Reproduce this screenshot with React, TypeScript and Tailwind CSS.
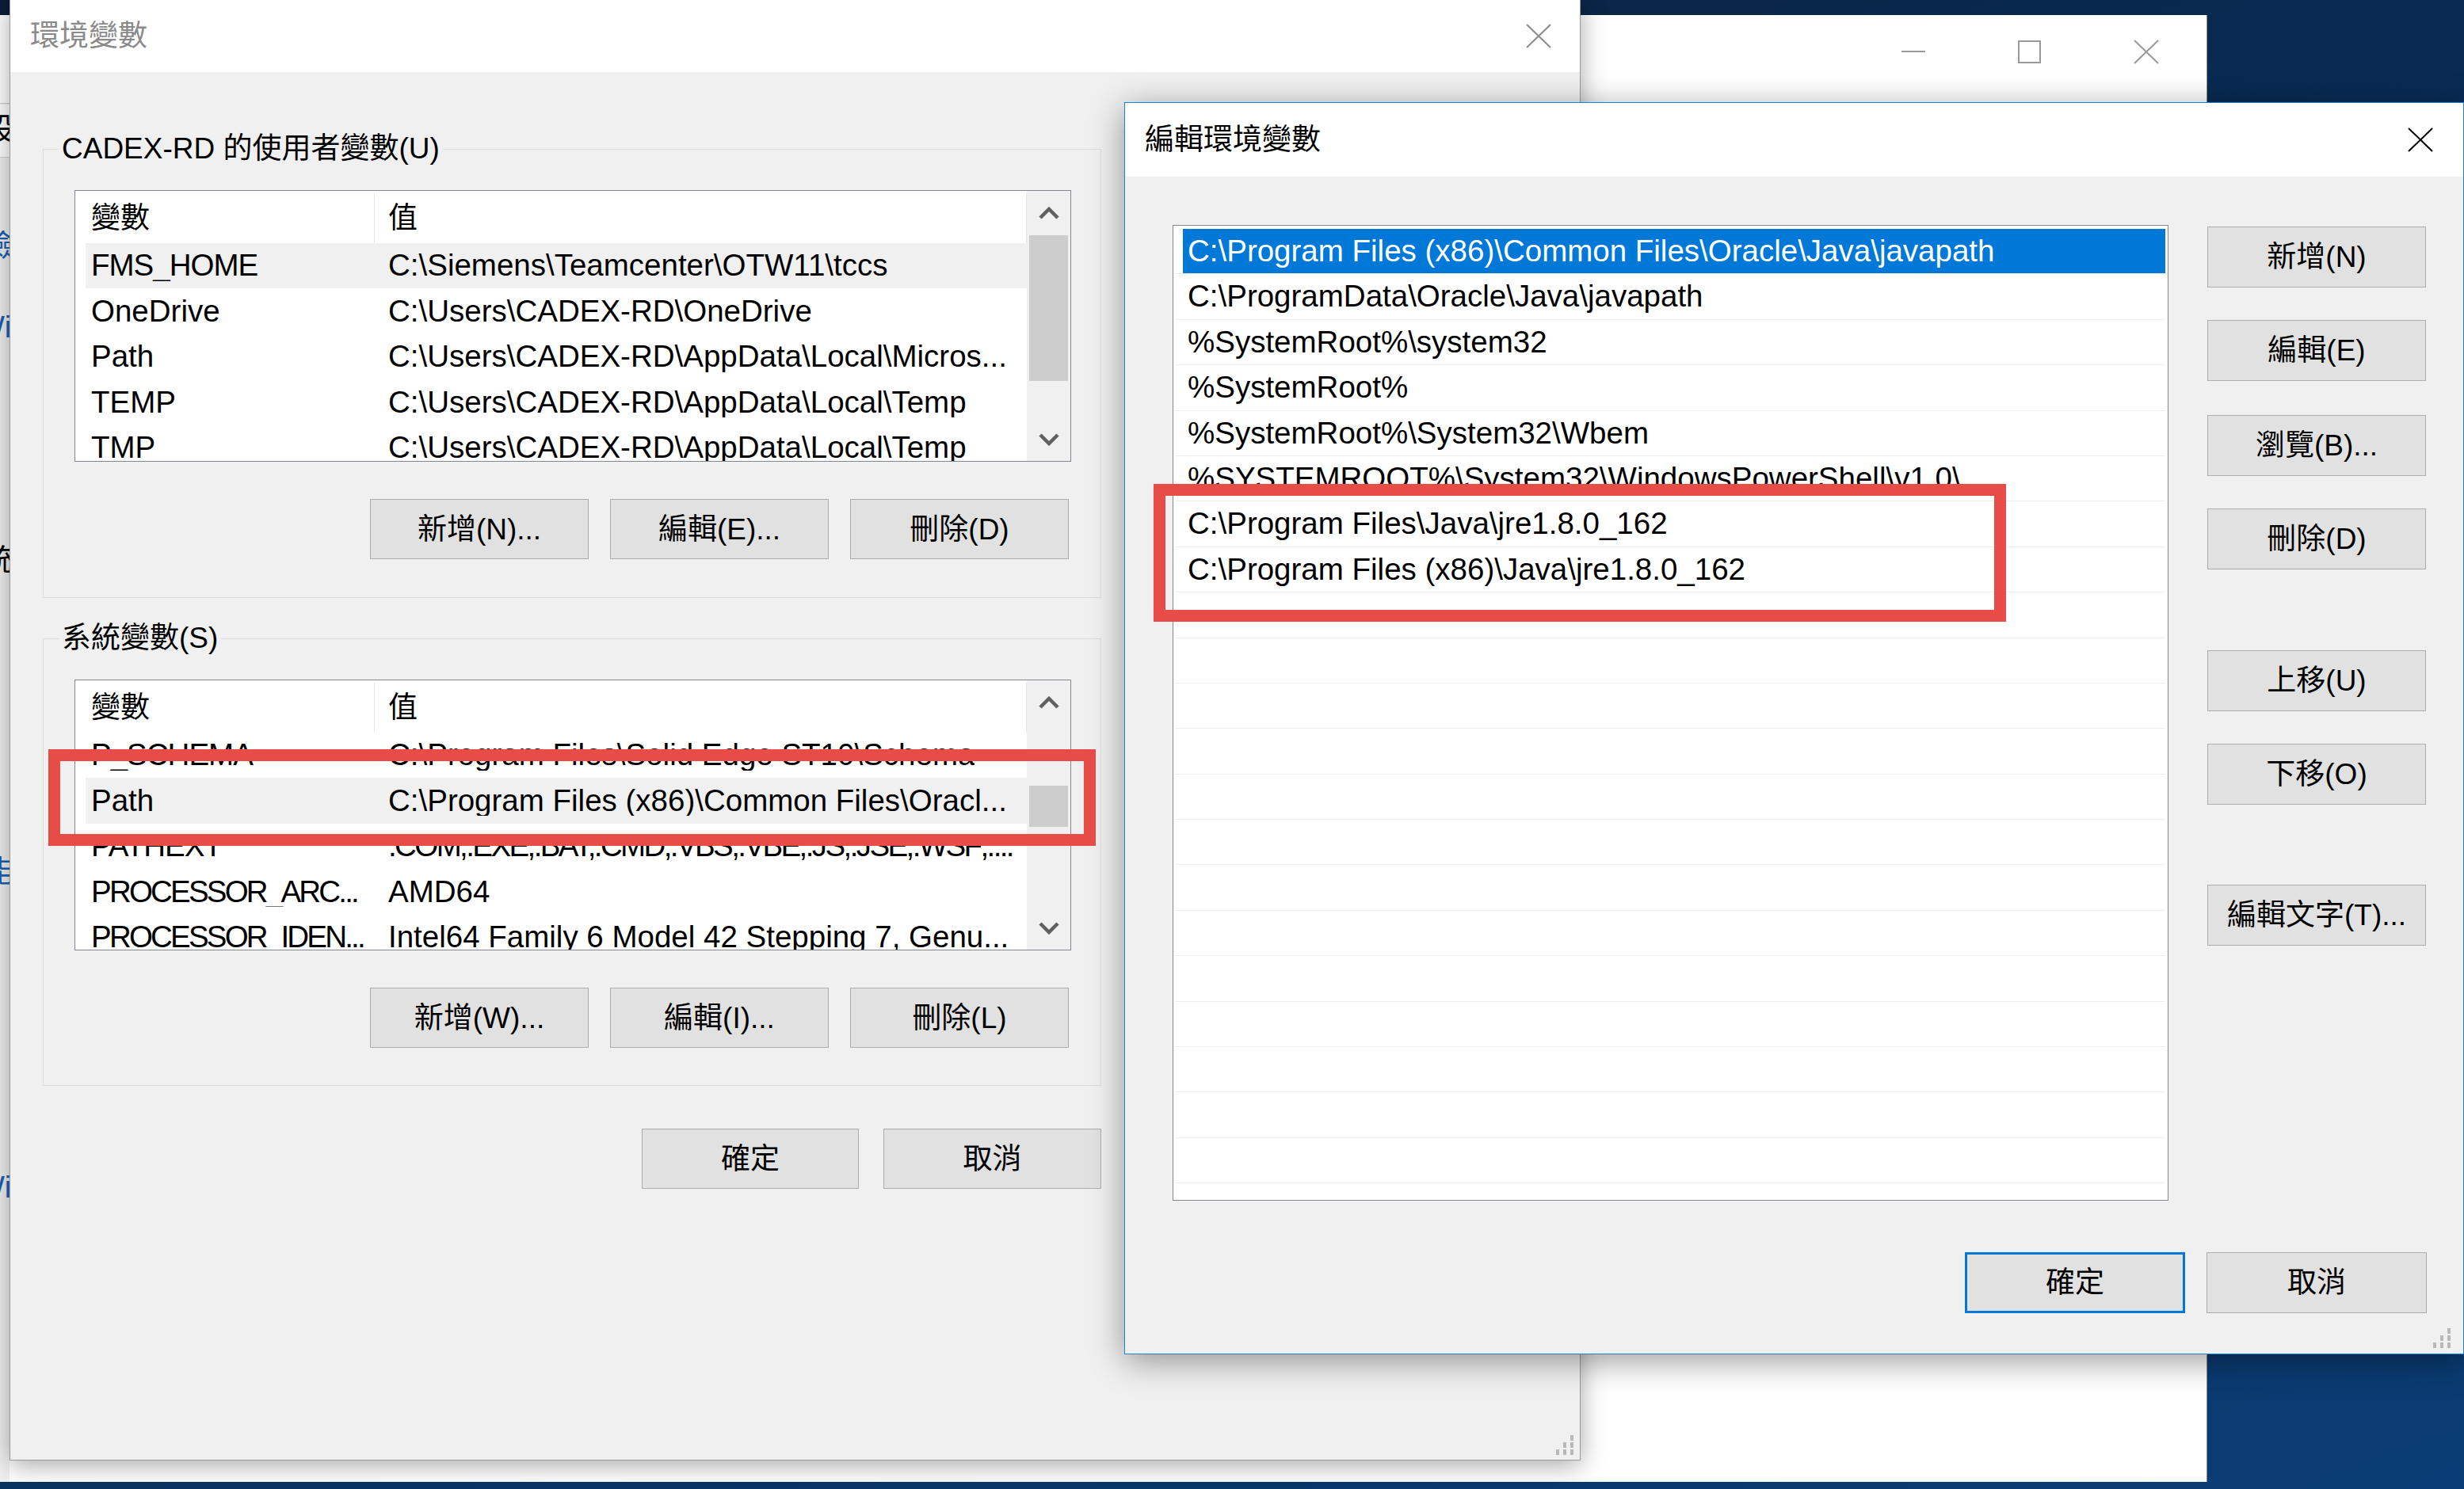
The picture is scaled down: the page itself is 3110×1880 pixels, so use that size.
import React from "react";

const FONT = "font-['Liberation_Sans','Noto_Sans_CJK_TC',sans-serif]";

function CloseX({ className }: { className: string }) {
  return (
    <svg width="32" height="31" viewBox="0 0 32 31" className={className}>
      <path d="M1 1 L31 30 M31 1 L1 30" stroke="currentColor" strokeWidth="2" fill="none" />
    </svg>
  );
}

function Chevron({ up }: { up: boolean }) {
  return (
    <svg width="26" height="16" viewBox="0 0 26 16">
      <polyline
        points={up ? "2,14 13,3 24,14" : "2,2 13,13 24,2"}
        fill="none"
        stroke="#606060"
        strokeWidth="4.5"
      />
    </svg>
  );
}

function Grip() {
  const cells = [
    [2, 0],
    [1, 1],
    [2, 1],
    [0, 2],
    [1, 2],
    [2, 2],
  ];
  return (
    <svg width="28" height="28" viewBox="0 0 28 28">
      {cells.map(([c, r], i) => (
        <rect key={i} x={c * 9 + 3} y={r * 9 + 1} width="4" height="7" fill="#b8b8b8" />
      ))}
    </svg>
  );
}

function Btn({ label, className }: { label: string; className: string }) {
  return (
    <div
      className={`bg-[#e1e1e1] flex items-center justify-center text-[37px] leading-none text-black shrink-0 ${className}`}
    >
      {label}
    </div>
  );
}

type Row = { name: string; value: string; sel?: boolean; nameCls?: string; valueCls?: string };

function VarList({ rows, hClass, thumbClass }: { rows: Row[]; hClass: string; thumbClass: string }) {
  return (
    <div className={`w-[1258px] ${hClass} border border-[#828790] bg-white flex overflow-hidden shrink-0`}>
      <div className="flex-1 flex flex-col min-w-0">
        <div className="h-[66px] flex shrink-0 text-[37px] leading-none">
          <div className="w-[378px] border-r border-[#e5e5e5] flex items-center pl-[20px] mt-[3px]">變數</div>
          <div className="flex-1 border-r border-[#e5e5e5] flex items-center pl-[17px] mt-[3px]">值</div>
        </div>
        <div className="flex-1 overflow-hidden pl-[13px] text-[38.5px] leading-none">
          {rows.map((r, i) => (
            <div
              key={i}
              className={`h-[57.4px] flex items-center pl-[7px] ${r.sel ? "bg-[#f0f0f0]" : ""}`}
            >
              <div className={`w-[375px] shrink-0 whitespace-nowrap overflow-hidden ${r.nameCls ?? ""}`}>{r.name}</div>
              <div className={`whitespace-nowrap overflow-hidden ${r.valueCls ?? ""}`}>{r.value}</div>
            </div>
          ))}
        </div>
      </div>
      <div className="w-[55px] shrink-0 bg-[#f0f0f0] flex flex-col">
        <div className="h-[55px] flex items-center justify-center shrink-0">
          <Chevron up />
        </div>
        <div className="flex-1 px-[3px]">
          <div className={`bg-[#cdcdcd] ${thumbClass}`} />
        </div>
        <div className="h-[55px] flex items-center justify-center shrink-0">
          <Chevron up={false} />
        </div>
      </div>
    </div>
  );
}

function Group({
  label,
  hClass,
  mtClass,
  children,
}: {
  label: string;
  hClass: string;
  mtClass: string;
  children: React.ReactNode;
}) {
  return (
    <div className={`relative w-[1336px] ${hClass} ${mtClass} border border-[#dcdcdc] flex flex-col pt-[51px] pl-[39px] shrink-0`}>
      <span className="absolute left-[19px] top-[-25px] bg-[#f0f0f0] px-[4px] text-[37px] leading-[48px] whitespace-nowrap">
        {label}
      </span>
      {children}
    </div>
  );
}

const userRows: Row[] = [
  { name: "FMS_HOME", value: "C:\\Siemens\\Teamcenter\\OTW11\\tccs", sel: true, nameCls: "tracking-[-1px]" },
  { name: "OneDrive", value: "C:\\Users\\CADEX-RD\\OneDrive" },
  { name: "Path", value: "C:\\Users\\CADEX-RD\\AppData\\Local\\Micros..." },
  { name: "TEMP", value: "C:\\Users\\CADEX-RD\\AppData\\Local\\Temp" },
  { name: "TMP", value: "C:\\Users\\CADEX-RD\\AppData\\Local\\Temp" },
];

const sysRows: Row[] = [
  { name: "P_SCHEMA", value: "C:\\Program Files\\Solid Edge ST10\\Schema", nameCls: "tracking-[-1px]" },
  { name: "Path", value: "C:\\Program Files (x86)\\Common Files\\Oracl...", sel: true },
  {
    name: "PATHEXT",
    value: ".COM;.EXE;.BAT;.CMD;.VBS;.VBE;.JS;.JSE;.WSF;....",
    nameCls: "tracking-[-1px]",
    valueCls: "tracking-[-2.6px]",
  },
  { name: "PROCESSOR_ARC...", value: "AMD64", nameCls: "tracking-[-2.8px]" },
  {
    name: "PROCESSOR_IDEN...",
    value: "Intel64 Family 6 Model 42 Stepping 7, Genu...",
    nameCls: "tracking-[-2.8px]",
  },
];

const pathRows: string[] = [
  "C:\\Program Files (x86)\\Common Files\\Oracle\\Java\\javapath",
  "C:\\ProgramData\\Oracle\\Java\\javapath",
  "%SystemRoot%\\system32",
  "%SystemRoot%",
  "%SystemRoot%\\System32\\Wbem",
  "%SYSTEMROOT%\\System32\\WindowsPowerShell\\v1.0\\",
  "C:\\Program Files\\Java\\jre1.8.0_162",
  "C:\\Program Files (x86)\\Java\\jre1.8.0_162",
  "", "", "", "", "", "", "", "", "", "", "", "", "", "",
];

export default function App() {
  return (
    <div
      className={`relative w-[3110px] h-[1880px] overflow-hidden bg-[linear-gradient(160deg,#0a1d36_0%,#08305e_55%,#0a3d75_100%)] ${FONT} text-black`}
    >
      {/* Background window (behind everything) */}
      <div className="absolute left-0 top-[19px] w-[2786px] h-[1852px] bg-white border-r border-[#8a8a8a] overflow-hidden">
        <div className="absolute left-0 top-[111px] w-[12px] h-[1741px] bg-[#f0f0f0] border-t border-[#d0d0d0]" />
        <div className="absolute left-0 top-[113px] w-[12px] h-[67px] bg-white border-b border-[#d0d0d0]" />
        <span className="absolute left-[-20px] top-[125px] text-[38px] leading-none">設</span>
        <span className="absolute left-[-20px] top-[272px] text-[38px] leading-none text-[#1a5fb4]">檢</span>
        <span className="absolute left-[-30px] top-[375px] text-[38px] leading-none text-[#1a5fb4]">Windows</span>
        <span className="absolute left-[-60px] top-[669px] text-[38px] leading-none">系統</span>
        <span className="absolute left-[-60px] top-[1062px] text-[38px] leading-none text-[#1a5fb4]">功能</span>
        <span className="absolute left-[-30px] top-[1461px] text-[38px] leading-none text-[#1a5fb4]">Windows</span>
        <div className="h-[92px] flex items-center justify-end pr-[60px] gap-[117px] text-[#999999]">
          <div className="w-[30px] h-[2px] bg-[#999999]" />
          <div className="w-[29px] h-[29px] border-2 border-[#999999]" />
          <CloseX className="text-[#999999]" />
        </div>
      </div>

      {/* Main dialog: 環境變數 */}
      <div className="absolute left-[12px] top-[-1px] w-[1983px] h-[1845px] bg-[#f0f0f0] border border-[#9a9a9a] shadow-[0_6px_30px_rgba(0,0,0,0.35)] flex flex-col">
        <div className="h-[91px] bg-white flex items-center justify-between pl-[25px] pr-[36px] shrink-0">
          <span className="text-[37px] leading-none text-[#8a8a8a]">環境變數</span>
          <CloseX className="text-[#8a8a8a]" />
        </div>
        <div className="flex-1 flex flex-col pl-[41px] pt-[97px]">
          <Group label="CADEX-RD 的使用者變數(U)" hClass="h-[567px]" mtClass="mt-0">
            <VarList rows={userRows} hClass="h-[343px]" thumbClass="mt-[1px] h-[184px]" />
            <div className="flex justify-end gap-[27px] mt-[47px] pr-[40px]">
              <Btn label="新增(N)..." className="w-[276px] h-[76px] border border-[#adadad]" />
              <Btn label="編輯(E)..." className="w-[276px] h-[76px] border border-[#adadad]" />
              <Btn label="刪除(D)" className="w-[276px] h-[76px] border border-[#adadad]" />
            </div>
          </Group>
          <Group label="系統變數(S)" hClass="h-[565px]" mtClass="mt-[51px]">
            <VarList rows={sysRows} hClass="h-[342px]" thumbClass="mt-[78px] h-[52px]" />
            <div className="flex justify-end gap-[27px] mt-[47px] pr-[40px]">
              <Btn label="新增(W)..." className="w-[276px] h-[76px] border border-[#adadad]" />
              <Btn label="編輯(I)..." className="w-[276px] h-[76px] border border-[#adadad]" />
              <Btn label="刪除(L)" className="w-[276px] h-[76px] border border-[#adadad]" />
            </div>
          </Group>
          <div className="w-[1336px] flex justify-end gap-[31px] mt-[54px]">
            <Btn label="確定" className="w-[274px] h-[76px] border border-[#adadad]" />
            <Btn label="取消" className="w-[275px] h-[76px] border border-[#adadad]" />
          </div>
        </div>
        <div className="absolute right-[5px] bottom-[4px]">
          <Grip />
        </div>
      </div>

      {/* Edit dialog: 編輯環境變數 */}
      <div className="absolute left-[1419px] top-[129px] w-[1691px] h-[1581px] bg-[#f0f0f0] border border-[#1883d7] shadow-[0_8px_40px_rgba(0,0,0,0.4)] flex flex-col">
        <div className="h-[93px] bg-white flex items-center justify-between pl-[25px] pr-[38px] shrink-0">
          <span className="text-[37px] leading-none">編輯環境變數</span>
          <CloseX className="text-black" />
        </div>
        <div className="flex-1 flex flex-col pl-[60px] pt-[61px]">
          <div className="flex gap-[49px]">
            <div className="w-[1257px] h-[1232px] border border-[#828790] bg-white pt-[4px] pl-[2px] pr-[3px] overflow-hidden shrink-0 text-[38.5px] leading-none">
              {pathRows.map((t, i) => (
                <div key={i} className="h-[57.4px] border-b border-[#efefef] flex">
                  <div
                    className={`flex-1 ml-[10px] flex items-center pl-[6px] whitespace-nowrap ${
                      i === 0 ? "bg-[#0078d7] text-white" : ""
                    }`}
                  >
                    {t}
                  </div>
                </div>
              ))}
            </div>
            <div className="flex flex-col w-[276px]">
              <Btn label="新增(N)" className="w-[276px] h-[77px] border border-[#adadad] mt-[2px]" />
              <Btn label="編輯(E)" className="w-[276px] h-[77px] border border-[#adadad] mt-[41px]" />
              <Btn label="瀏覽(B)..." className="w-[276px] h-[77px] border border-[#adadad] mt-[43px]" />
              <Btn label="刪除(D)" className="w-[276px] h-[77px] border border-[#adadad] mt-[41px]" />
              <Btn label="上移(U)" className="w-[276px] h-[77px] border border-[#adadad] mt-[102px]" />
              <Btn label="下移(O)" className="w-[276px] h-[77px] border border-[#adadad] mt-[41px]" />
              <Btn label="編輯文字(T)..." className="w-[276px] h-[77px] border border-[#adadad] mt-[101px]" />
            </div>
          </div>
          <div className="flex justify-end gap-[27px] mt-[65px] pr-[46px]">
            <Btn label="確定" className="w-[278px] h-[77px] border-[3px] border-[#0078d7]" />
            <Btn label="取消" className="w-[278px] h-[77px] border border-[#adadad]" />
          </div>
        </div>
        <div className="absolute right-[13px] bottom-[5px]">
          <Grip />
        </div>
      </div>

      {/* Red highlight boxes */}
      <div className="absolute left-[61px] top-[946px] w-[1322px] h-[122px] border-[15px] border-[#e74c46]" />
      <div className="absolute left-[1456px] top-[611px] w-[1076px] h-[174px] border-[15px] border-[#e74c46]" />
    </div>
  );
}
